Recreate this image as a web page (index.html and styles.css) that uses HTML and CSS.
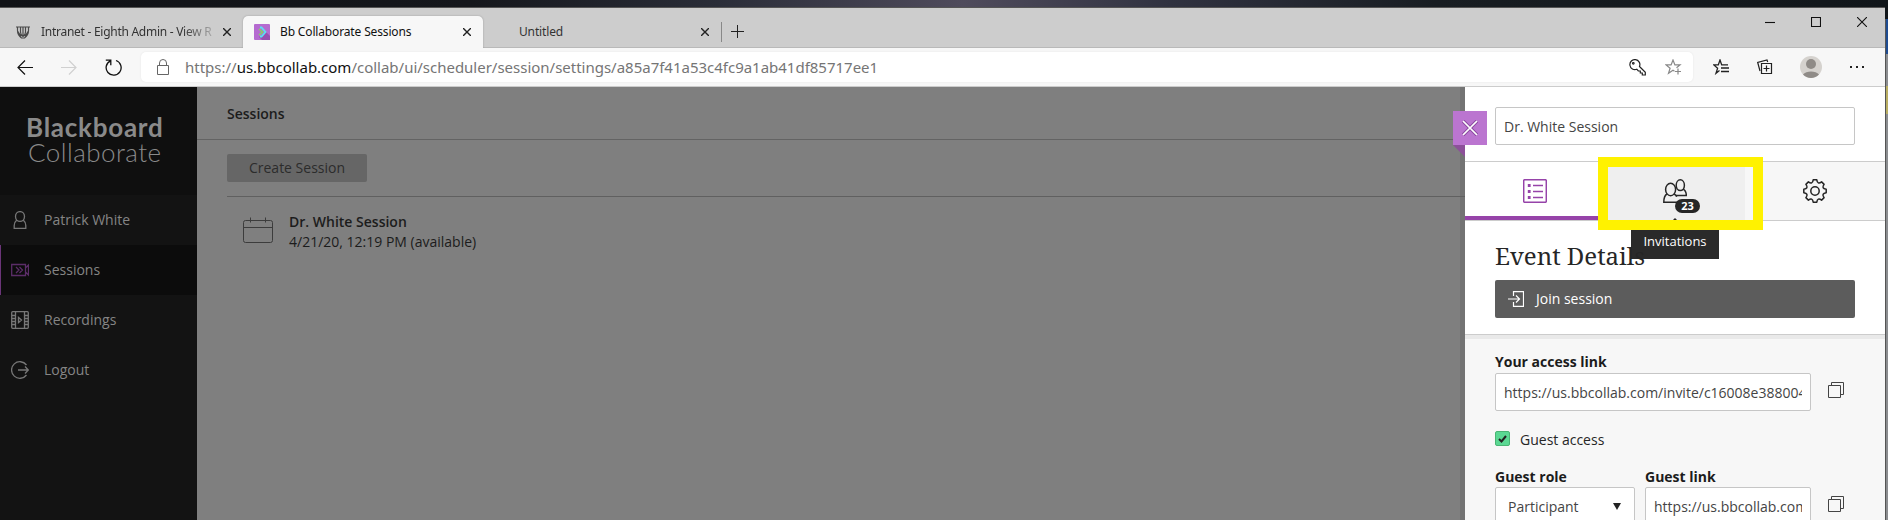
FILE: index.html
```html
<!DOCTYPE html>
<html lang="en">
<head>
<meta charset="utf-8">
<title>Bb Collaborate Sessions</title>
<link rel="stylesheet" href="styles.css">
</head>
<body>
<div class="desktop">
  <div class="window">
    <div class="tabbar">
      <div class="tab first">
        <svg class="fav" width="14" height="13" viewBox="0 0 14 13" fill="none" stroke="#4a4a4a" stroke-width="1.200"><path d="M0 1h14M1.500 1v3.500c0 3.500 2 6 4 7.500h3c2-1.500 4-4 4-7.500V1M4.500 1v5c0 1.800 1 3.500 2.500 4.500 1.500-1 2.500-2.700 2.500-4.500v-5M7 1v9M2 5.500l3 5M12 5.500l-3 5"/></svg>
        <span class="tab-title faded">Intranet - Eighth Admin - View R</span>
        <svg class="x" width="8" height="8" viewBox="0 0 8 8"><path d="M0 0l8 8M8 0l-8 8"/></svg>
      </div>
      <div class="tab active">
        <svg class="fav" width="16" height="16" viewBox="0 0 16 16"><rect width="16" height="16" rx="1" fill="#b56bd0"/><path d="M12 8l4 4v4H8l-3-3z" fill="#9850b0"/><path d="M6 3.500h1.500L11.500 8l-4 4.500H6" fill="none" stroke="#5ce0f0" stroke-width="1.800"/><path d="M5 5l3.500 3L5 11" fill="none" stroke="#82d860" stroke-width="1.600"/></svg>
        <span class="tab-title">Bb Collaborate Sessions</span>
        <svg class="x" width="8" height="8" viewBox="0 0 8 8"><path d="M0 0l8 8M8 0l-8 8"/></svg>
      </div>
      <div class="tab third">
        <span class="tab-title">Untitled</span>
        <svg class="x" width="8" height="8" viewBox="0 0 8 8"><path d="M0 0l8 8M8 0l-8 8"/></svg>
      </div>
      <div class="newtab"><svg width="13" height="13" viewBox="0 0 13 13"><path d="M0 6.500h13M6.500 0v13" stroke="#222"/></svg></div>
      <div class="winctl">
        <svg width="10" height="10" viewBox="0 0 10 10"><path d="M0 5.500h10"/></svg>
        <svg width="10" height="10" viewBox="0 0 10 10"><path d="M.5.5h9v9h-9z"/></svg>
        <svg width="10" height="10" viewBox="0 0 10 10"><path d="M0 0l10 10M10 0L0 10"/></svg>
      </div>
    </div>
    <div class="toolbar">
      <svg class="nav-icon" width="16" height="15" viewBox="0 0 16 15" fill="none" stroke="#111" stroke-width="1.200"><path d="M16 7.500H1M8 .5l-7 7 7 7"/></svg>
      <svg class="nav-icon" width="16" height="15" viewBox="0 0 16 15" fill="none" stroke="#d0d0d0" stroke-width="1.200"><path d="M0 7.500h15M8 .5l7 7-7 7"/></svg>
      <svg class="reload" width="17" height="17" viewBox="0 0 17 17" fill="none" stroke="#111" stroke-width="1.300"><path d="M11 1.500A7.500 7.500 0 1 1 5.500 1.800M.8 1.200h5v5"/></svg>
      <div class="urlbar">
        <svg class="lock" width="12" height="16" viewBox="0 0 12 16" fill="none" stroke="#666"><path d="M.5 6.500h11v9H.5zM2.500 6.500v-2.500a3.500 3.500 0 0 1 7 0v2.500"/></svg>
        <span class="url">https://<b>us.bbcollab.com</b>/collab/ui/scheduler/session/settings/a85a7f41a53c4fc9a1ab41df85717ee1</span>
        <svg class="key" width="17" height="17" viewBox="0 0 17 17" fill="none" stroke="#222" stroke-width="1.200"><path d="M10.500 7.500L16.300 13.300v2.700h-3v-2h-2v-2h-2L7.800 10.200A5 5 0 1 1 10.500 7.500z"/><circle cx="4.300" cy="4.300" r=".8"/></svg>
        <svg width="17" height="17" viewBox="0 0 17 17" fill="none" stroke="#888" stroke-width="1.200"><path d="M9.500 12.300L8 11.300 3.500 14.300 5.100 9.200 1 5.900h5.100L8 1l1.900 4.900H15l-3.500 2.800M13 9.500v6M10 12.500h6"/></svg>
      </div>
      <div class="tools">
        <svg width="16" height="16" viewBox="0 0 16 16" fill="none" stroke="#222" stroke-width="1.300"><path d="M6.500 11.500L3 14.300 4.600 9.200.8 5.900H5.300L7 1l1.700 4.900H15M8 9h8M8 12.500h8"/></svg>
        <svg width="16" height="16" viewBox="0 0 16 16" fill="none" stroke="#222" stroke-width="1.200"><path d="M4.500 4.500h10v10h-10zM9.500 6.500v6M6.500 9.500h6M3 12L.7 3.500 10 1l.7 2"/></svg>
        <svg width="22" height="22" viewBox="0 0 22 22"><circle cx="11" cy="11" r="11" fill="#d5d2ce"/><circle cx="11" cy="8" r="5" fill="#8f8b87"/><path d="M3 18.500a9.300 6 0 0 1 16 0A11 11 0 0 1 3 18.500z" fill="#8f8b87"/></svg>
        <svg width="14" height="4" viewBox="0 0 14 4" fill="#222"><path d="M0 1h2v2H0zM6 1h2v2H6zM12 1h2v2h-2z"/></svg>
      </div>
    </div>
    <div class="page">
      <nav class="sidebar">
        <div class="logo"><div class="l1">Blackboard</div><div class="l2">Collaborate</div></div>
        <div class="item user"><svg width="18" height="18" viewBox="0 0 18 18"><ellipse cx="9" cy="5.500" rx="4.500" ry="4.900"/><path d="M5.800 9C4 10.500 3.200 12.500 3.200 14.500v2.800h11.600v-2.800c0-2-.8-4-2.600-5.500"/></svg><span>Patrick White</span></div>
        <div class="item current"><svg width="18" height="18" viewBox="0 0 18 18"><path d="M.7 3.500h13.800v11H.7zM14.500 7l3-3v10l-3-3M5 6l3 3-3 3M8.500 6l3 3-3 3"/></svg><span>Sessions</span></div>
        <div class="item"><svg width="18" height="18" viewBox="0 0 18 18"><path d="M1.700.7h14.600q1 0 1 1v14.600q0 1-1 1H1.700q-1 0-1-1V1.700q0-1 1-1zM4.500.7v16.600M13.500.7v16.600M.7 4.500h3.800M.7 7.500h3.800M.7 10.500h3.800M.7 13.500h3.800M13.500 4.500h3.800M13.500 7.500h3.800M13.500 10.500h3.800M13.500 13.500h3.800M7.500 6.500v5l3-2.500z"/></svg><span>Recordings</span></div>
        <div class="item"><svg width="18" height="18" viewBox="0 0 18 18"><path d="M15.500 4A8.300 8.300 0 1 0 15.500 14M7 9h10M14 5.500L17.300 9 14 12.500"/></svg><span>Logout</span></div>
      </nav>
      <main class="main">
        <div class="main-head">Sessions</div>
        <div class="main-body">
          <div class="create">Create Session</div>
          <div class="session">
            <svg width="30" height="27" viewBox="0 0 30 27" fill="none" stroke="#3c3c3c"><path d="M.5 10.500h29M2.500 3.500h25q2 0 2 2v18q0 2-2 2h-25q-2 0-2-2v-18q0-2 2-2zM7.500.5v5M22.500.5v5"/></svg>
            <div><div class="s-title">Dr. White Session</div><div class="s-date">4/21/20, 12:19 PM (available)</div></div>
          </div>
        </div>
      </main>
      <aside class="panel">
        <div class="name-row"><div class="input">Dr. White Session</div></div>
        <div class="ptabs">
          <div class="ptab on"><svg width="24" height="24" viewBox="0 0 24 24" fill="none" stroke="#9643a9" stroke-width="1.500"><rect x=".7" y=".7" width="22.600" height="22.600" rx="1"/><path d="M10 6.500h10M10 12.500h10M10 18.500h10"/><path d="M4.800 6.500h2.800M4.800 12.500h2.800M4.800 18.500h2.800" stroke-width="2.800"/></svg></div>
          <div class="ptab hover">
            <svg width="24" height="24" viewBox="0 0 24 24" fill="none" stroke="#262626" stroke-width="1.500"><path d="M20.200 10.200c2.400 1.300 3.100 3.300 3.100 6.300H13"/><ellipse cx="17.300" cy="6.200" rx="4.100" ry="5.400"/><ellipse cx="7.600" cy="10.500" rx="5" ry="6.200" fill="#efefef"/><path d="M4 15C1.500 16.500.8 19 .8 23.200H14M11.200 15c1.300.8 2 1.500 2.500 2.700"/></svg>
            <span class="count">23</span><span class="tip-arrow"></span>
            <div class="tip">Invitations</div>
          </div>
          <div class="ptab"><svg width="24" height="24" viewBox="0 0 24 24" fill="none" stroke="#262626" stroke-width="1.500" stroke-linejoin="round"><circle cx="12" cy="12" r="4.200"/><path d="M10.200.8h3.600Q14.500 6 18.600 2.900L21.100 5.400Q18 9.500 23.200 10.200v3.600Q18 14.500 21.100 18.600L18.600 21.100Q14.500 18 13.800 23.200h-3.600Q9.500 18 5.400 21.100L2.900 18.600Q6 14.500.8 13.800v-3.600Q6 9.500 2.900 5.400L5.400 2.900Q9.500 6 10.200.8z"/></svg></div>
          <div class="highlight"></div>
        </div>
        <section class="details">
          <h1>Event Details</h1>
          <div class="join"><svg width="16" height="16" viewBox="0 0 16 16" fill="none" stroke="#fff" stroke-width="1.200"><path d="M5.500 5V.6h10v14.800h-10V11M0 8h11.500M8 4.500L11.500 8 8 11.500"/></svg><span>Join session</span></div>
        </section>
        <section class="form">
          <label class="first-label">Your access link</label>
          <div class="row"><div class="input link"><span>https://us.bbcollab.com/invite/c16008e388004</span></div>
            <svg width="16" height="16" viewBox="0 0 16 16" fill="none" stroke="#444"><path d="M.5 3.500h12v12H.5zM3.500 3.500v-3h12v12h-3"/></svg></div>
          <div class="check"><span class="box"><svg width="9" height="8" viewBox="0 0 9 8" fill="none" stroke="#222" stroke-width="2"><path d="M1 4l2.500 2.500L8 1"/></svg></span><span class="check-text">Guest access</span></div>
          <div class="cols">
            <div class="role"><label>Guest role</label><div class="input select">Participant<svg width="8" height="7" viewBox="0 0 8 7"><path d="M0 0h8L4 7z" fill="#222"/></svg></div></div>
            <div class="guest"><label>Guest link</label><div class="row"><div class="input link"><span>https://us.bbcollab.com/guest</span></div>
            <svg width="16" height="16" viewBox="0 0 16 16" fill="none" stroke="#444"><path d="M.5 3.500h12v12H.5zM3.500 3.500v-3h12v12h-3"/></svg></div></div>
          </div>
        </section>
        <div class="close"><svg width="16" height="16" viewBox="0 0 16 16"><path d="M1 1l14 14M15 1L1 15" fill="none" stroke="#8c4aa0" stroke-width="3.600"/><path d="M1 1l14 14M15 1L1 15" fill="none" stroke="#fff" stroke-width="1.700"/></svg></div>
      </aside>
    </div>
  </div>
  <div class="edge"></div>
</div>
</body>
</html>
```
FILE: styles.css
```css
* { box-sizing: border-box; }
body { margin: 0; font-family: "Open Sans", sans-serif; font-size: 14px; color: #262626; overflow: hidden; }
svg { display: block; flex: none; }
.desktop { width: 1888px; height: 520px; padding-top: 7px; display: flex; background: linear-gradient(90deg, #101216, #15171c 25%, #2a2d38 38%, #4f4b5c 51%, #303240 62%, #181d22 76%, #11161a); }
.window { width: 1885px; height: 513px; border-top: 1px solid #555; background: #cdcdcd; display: flex; flex-direction: column; }
.edge { width: 3px; height: 501px; margin-top: 12px; border-left: 1px solid #555; background: linear-gradient(#1f4c91 0 35px, #8b8d90 35px 67px, #b9ae62 67px 95px, #8b8d90 95px); }

.tabbar { height: 40px; padding-top: 8px; display: flex; border-bottom: 1px solid #b9b9b9; font-family: "Noto Sans", sans-serif; font-size: 12px; }
.tab { display: flex; align-items: center; height: 32px; color: #333; white-space: nowrap; }
.tab-title { flex: 1; overflow: hidden; letter-spacing: -.15px; padding-bottom: 1px; }
.first { width: 243px; padding: 0 12px 0 16px; }
.first .fav { margin-right: 11px; }
.faded { letter-spacing: -.27px; margin-right: 10px; -webkit-mask-image: linear-gradient(90deg, #000 82%, transparent 105%); mask-image: linear-gradient(90deg, #000 82%, transparent 105%); }
.active { width: 240px; padding: 0 12px 0 11px; background: #f7f7f7; color: #111; border-radius: 5px 5px 0 0; box-shadow: 0 0 2px #999; clip-path: inset(-3px -3px 0 -3px); }
.active .fav { margin-right: 10px; }
.third { width: 238px; padding: 0 12px 0 36px; }
.x path { fill: none; stroke: #222; stroke-width: 1.400; }
.newtab { height: 20px; margin-top: 6px; padding: 3px 0 0 9px; border-left: 1px solid #888; }
.winctl { margin-left: auto; display: flex; gap: 36px; padding: 1px 18px 0 0; }
.winctl path { fill: none; stroke: #111; stroke-width: 1.100; }

.toolbar { height: 39px; background: #f7f7f7; border-bottom: 1px solid #ccc; display: flex; align-items: center; padding-left: 17px; }
.nav-icon { margin-right: 28px; }
.reload { margin-right: 19px; }
.urlbar { width: 1552px; height: 30px; background: #fff; border-radius: 5px; display: flex; align-items: center; padding: 0 11px 0 16px; box-shadow: 0 0 2px #e4e4e4; }
.lock { margin-right: 16px; }
.url { flex: 1; font-family: "Noto Sans", sans-serif; font-size: 15px; color: #757575; letter-spacing: -.01px; white-space: nowrap; }
.url b { font-weight: 400; color: #111; }
.key { margin-right: 19px; }
.tools { flex: 1; display: flex; align-items: center; justify-content: space-between; padding: 0 21px 0 20px; }

.page { height: 433px; display: flex; overflow: hidden; background: #fff; }
.sidebar { width: 197px; background: #131313; flex: none; }
.logo { height: 108px; padding: 28px 0 0 26px; background: #0f0f0f; color: #8a8a8a; font-family: Lato, sans-serif; font-size: 26px; line-height: 25px; white-space: nowrap; }
.l1 { font-weight: 700; letter-spacing: .75px; }
.l2 { font-weight: 300; padding-left: 2px; letter-spacing: .45px; }
.item { height: 50px; display: flex; align-items: center; gap: 15px; padding-left: 10px; color: #858585; border-left: 1px solid transparent; }
.item span { padding-bottom: 2px; }
.item svg { fill: none; stroke: #777; stroke-width: 1.300; }
.current { background: #0c0c0c; border-color: #6a3578; }
.item.current svg { stroke: #5b2d68; }
.main { width: 1268px; flex: none; background: #7f7f7f; color: #1c1c1c; box-shadow: inset -5px 0 #737373; }
.main-head { height: 53px; border-bottom: 1px solid #636363; padding: 17px 30px 0; font-weight: 600; font-size: 14px; line-height: 19px; }
.main-body { padding: 14px 0 0 30px; }
.create { width: 140px; height: 28px; border-radius: 2px; background: #666; color: #2c2c2c; text-align: center; line-height: 28px; }
.session { margin-top: 14px; border-top: 1px solid #606060; padding: 15px 0 0 16px; display: flex; gap: 16px; line-height: 20px; }
.session svg { margin-top: 5px; }
.s-title { font-weight: 600; }

.panel { width: 420px; height: 433px; position: relative; background: #fff; flex: none; }
.name-row { height: 75px; padding: 20px 30px 0; border-bottom: 1px solid #ccc; }
.input { height: 38px; border: 1px solid #c6c6c6; border-radius: 2px; background: #fff; padding: 0 8px; line-height: 37px; color: #444; white-space: nowrap; }
.ptabs { height: 59px; display: grid; grid-template-columns: repeat(3, 140px); background: #f7f7f7; border-bottom: 1px solid #ccc; position: relative; }
.ptab { display: flex; justify-content: center; padding-top: 17px; position: relative; }
.on { background: #fff; box-shadow: inset 0 -4px #9643a9; }
.hover { background: #efefef; }
.count { position: absolute; left: 70px; top: 37px; width: 25px; height: 14px; border-radius: 7px; background: #262626; color: #fff; font-size: 11px; font-weight: 700; line-height: 14px; text-align: center; }
.tip-arrow { position: absolute; left: 67px; top: 56px; border: 3px solid transparent; border-top: 0; border-bottom-color: #262626; }
.tip { position: absolute; z-index: 1; left: 26px; top: 58px; width: 88px; height: 39px; background: rgba(38,38,38,.98); color: #fff; text-align: center; font-size: 13px; font-weight: 500; line-height: 43px; }
.highlight { position: absolute; z-index: 2; left: 133px; top: -5px; width: 165px; height: 73px; border: 10px solid #fff200; }
.details { height: 118px; padding: 18px 30px 0; border-bottom: 4px solid #e9e9e9; box-shadow: inset 0 -1px #ccc; }
h1 { margin: 0; height: 41px; font-family: "Noto Serif", "DejaVu Serif Condensed", "DejaVu Serif", serif; font-weight: 400; font-size: 24px; line-height: 34px; white-space: nowrap; }
.join { height: 38px; border-radius: 2px; background: #5c5c5c; color: #fff; display: flex; align-items: center; gap: 12px; padding-left: 13px; font-weight: 500; }
.join span { padding-bottom: 2px; }
.form { height: 181px; background: #f7f7f7; padding: 13px 0 0 30px; }
label { display: block; height: 20px; line-height: 20px; font-weight: 700; color: #1c1c1c; }
.first-label { height: 21px; }
.row { display: flex; gap: 17px; }
.row svg { margin-top: 9px; }
.link { width: 316px; }
.link span { display: block; overflow: hidden; }
.check { display: flex; align-items: center; gap: 10px; height: 19px; margin-top: 18px; }
.check-text { padding-top: 1px; }
.box { width: 15px; height: 15px; border: 1px solid #49b573; border-radius: 2px; background: #5bd893; display: flex; align-items: center; justify-content: center; }
.cols { display: flex; gap: 10px; margin-top: 19px; }
.role { width: 140px; }
.select { display: flex; align-items: center; justify-content: space-between; padding: 0 13px 0 12px; }
.guest .link { width: 166px; }
.close { position: absolute; left: -12px; top: 24px; width: 34px; height: 34px; background: #bb75d0; display: flex; align-items: center; justify-content: center; }
.close::after { content: ""; position: absolute; left: 0; top: 34px; border-top: 12px solid #8c5099; border-left: 12px solid transparent; }
```
